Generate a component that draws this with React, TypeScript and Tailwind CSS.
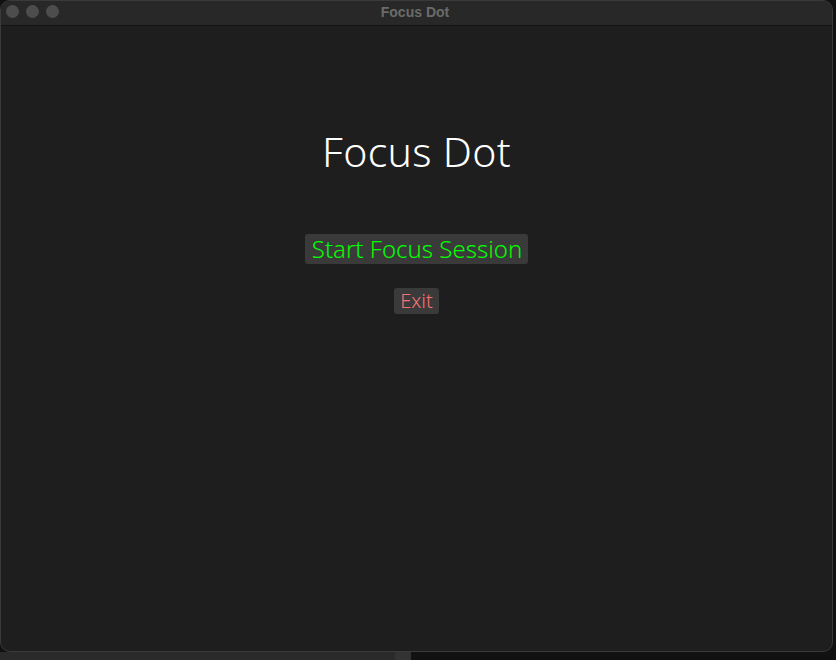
export default function App() {
  return (
    <div className="w-[836px] h-[660px] bg-[#121112] flex flex-col overflow-hidden">
      <div className="w-[833px] h-[652px] shrink-0 rounded-[10px] border border-[#3a3a3a] bg-[#1e1e1e] flex flex-col overflow-hidden">
        {/* title bar */}
        <div className="h-[25px] shrink-0 bg-[#272827] border-b border-[#141414] relative flex items-center justify-center">
          <div className="absolute left-[5px] top-[4px] flex gap-[7px]">
            <span className="w-[13px] h-[13px] rounded-full bg-[#4c4d4c]" />
            <span className="w-[13px] h-[13px] rounded-full bg-[#4c4d4c]" />
            <span className="w-[13px] h-[13px] rounded-full bg-[#4c4d4c]" />
          </div>
          <span className="text-[14px] leading-[16px] -mt-[3px] font-bold text-[#6b6b6b] font-['Liberation_Sans',sans-serif] pr-[3px]">
            Focus Dot
          </span>
        </div>

        {/* content */}
        <div className="flex flex-col items-center pt-[99px] font-['Noto_Sans',sans-serif]">
          <h1 className="text-[41px] leading-[52px] font-light text-white tracking-[0.3px]">Focus Dot</h1>
          <button className="mt-[57px] h-[30px] pl-[7px] pr-[6px] rounded-[3px] bg-[#3a3a3a] text-[#00ff00] text-[24px] leading-[30px] font-light">
            Start Focus Session
          </button>
          <button className="mt-[24px] h-[26px] px-[6px] rounded-[3px] bg-[#3a3a3a] text-[#f87171] text-[20px] leading-[26px] font-light">
            Exit
          </button>
        </div>
      </div>
      <div className="flex h-[8px] mt-0">
        <div className="w-[395px] bg-[#2a2a2a]" />
        <div className="w-[16px] bg-[#333333]" />
        <div className="flex-1 bg-[#121112]" />
      </div>
    </div>
  );
}
